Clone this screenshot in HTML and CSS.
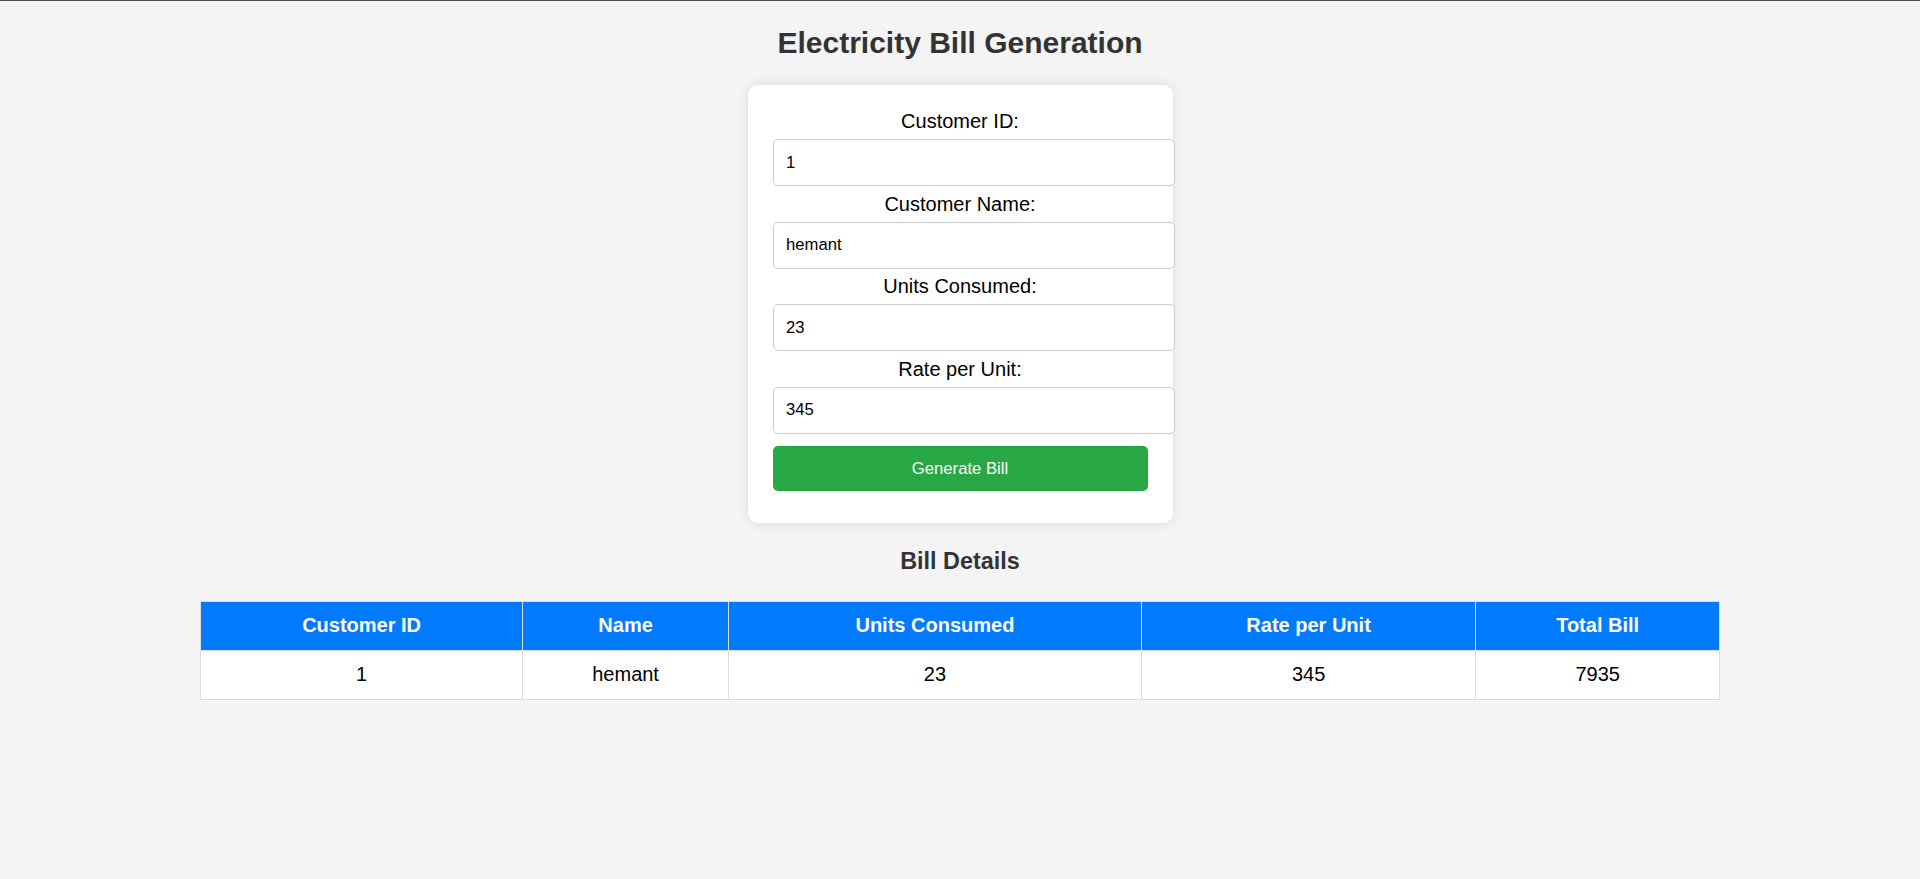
FILE: index.html
```html
<!DOCTYPE html>
<html lang="en">
<head>
<meta charset="UTF-8">
<title>Electricity Bill Generation</title>
<link rel="stylesheet" href="styles.css">
</head>
<body>
  <h2 class="title">Electricity Bill Generation</h2>
  <form class="card">
    <label class="field-label">Customer ID:</label>
    <input class="field-input" type="text" value="1">
    <label class="field-label">Customer Name:</label>
    <input class="field-input" type="text" value="hemant">
    <label class="field-label">Units Consumed:</label>
    <input class="field-input" type="text" value="23">
    <label class="field-label">Rate per Unit:</label>
    <input class="field-input" type="text" value="345">
    <button class="submit-btn" type="button">Generate Bill</button>
  </form>
  <h3 class="section-title">Bill Details</h3>
  <table class="bill-table">
    <thead>
      <tr>
        <th>Customer ID</th>
        <th>Name</th>
        <th>Units Consumed</th>
        <th>Rate per Unit</th>
        <th>Total Bill</th>
      </tr>
    </thead>
    <tbody>
      <tr>
        <td>1</td>
        <td>hemant</td>
        <td>23</td>
        <td>345</td>
        <td>7935</td>
      </tr>
    </tbody>
  </table>
</body>
</html>
```
FILE: styles.css
```css
html {
  border-top: 1px solid #4d4d4d;
  background: #f4f4f4;
}

body {
  margin: 0;
  padding: 0 10px 10px;
  font-family: "Liberation Sans", Arial, sans-serif;
  background: #f4f4f4;
  text-align: center;
}

.title {
  margin: 24px 0 25px;
  font-size: 30px;
  line-height: 35px;
  font-weight: bold;
  color: #333;
}

.card {
  width: 375px;
  margin: 0 auto;
  padding: 25px;
  background: #fff;
  border-radius: 10px;
  box-shadow: 0 0 12px rgba(0, 0, 0, 0.1);
  display: flex;
  flex-direction: column;
  align-items: flex-start;
}

.field-label {
  align-self: stretch;
  text-align: center;
  font-size: 20px;
  line-height: 23px;
  color: #000;
}

.field-input {
  box-sizing: content-box;
  width: 100%;
  margin: 6.25px 0;
  padding: 12.5px;
  border: 1px solid #ccc;
  border-radius: 5px;
  font-family: "Liberation Sans", Arial, sans-serif;
  font-size: 16.67px;
  line-height: 20px;
  height: 20px;
  color: #000;
  background: #fff;
  outline: none;
}

.submit-btn {
  box-sizing: border-box;
  width: 100%;
  margin: 6.25px 0;
  padding: 12.5px;
  border: none;
  border-radius: 5px;
  background: #28a745;
  color: #fff;
  font-family: "Liberation Sans", Arial, sans-serif;
  font-size: 16.67px;
  line-height: 20px;
  cursor: pointer;
}

.section-title {
  margin: 25px 0 26px;
  font-size: 23.4px;
  line-height: 27px;
  font-weight: bold;
  color: #333;
}

.bill-table {
  width: 80%;
  margin: 0 auto;
  border-collapse: collapse;
  table-layout: fixed;
  background: #fff;
}

.bill-table th,
.bill-table td {
  box-sizing: border-box;
  border: 1px solid #ddd;
  padding: 12.5px 15px;
  font-size: 20px;
  line-height: 23px;
  text-align: center;
}

.bill-table th {
  background: #007bff;
  color: #fff;
  font-weight: bold;
}

.bill-table td {
  color: #000;
}

.bill-table th:nth-child(1) { width: 21.21%; }
.bill-table th:nth-child(2) { width: 13.55%; }
.bill-table th:nth-child(3) { width: 27.18%; }
.bill-table th:nth-child(4) { width: 22.02%; }
.bill-table th:nth-child(5) { width: 16.04%; }
```
